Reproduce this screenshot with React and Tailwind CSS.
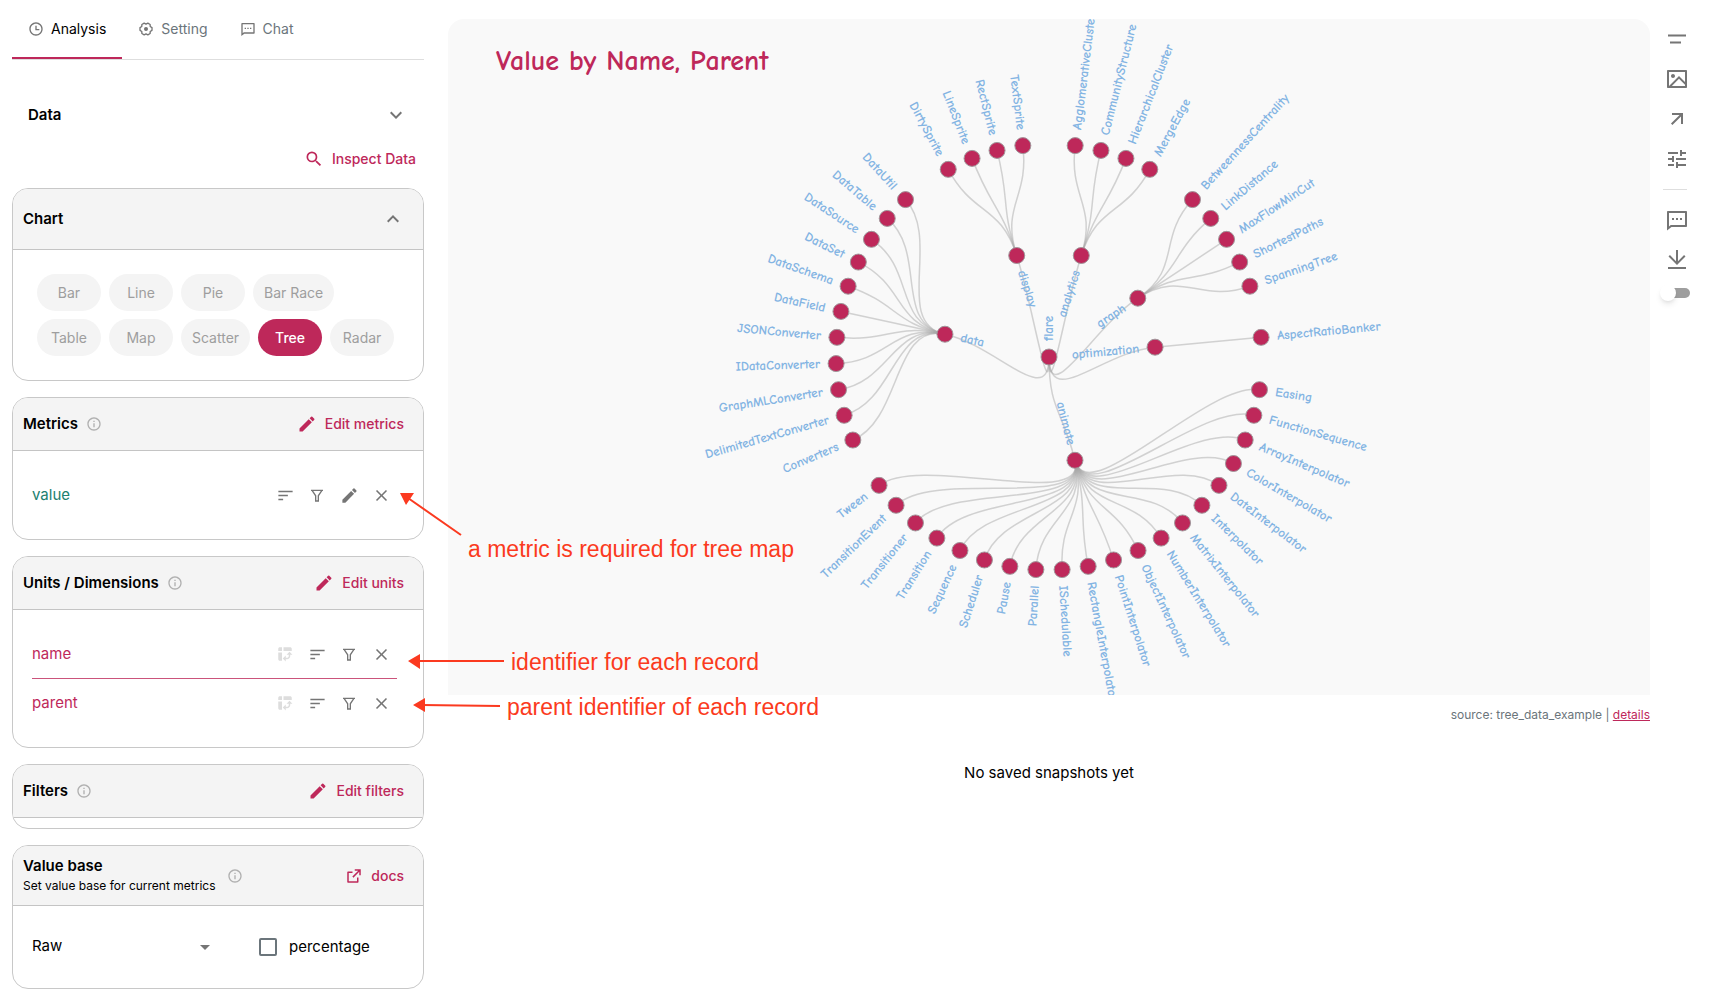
import { useState } from "react";
import { MdClose, MdEdit, MdInfoOutline, MdKeyboardArrowDown, MdKeyboardArrowUp, MdPivotTableChart, MdSearch, MdSort, MdTune } from "react-icons/md";
import {
  RiArrowRightUpLine,
  RiDownloadLine,
  RiExternalLinkLine,
  RiFilterLine,
  RiImageLine,
  RiMessage2Line,
  RiTimeLine,
} from "react-icons/ri";

const chartTypes = ["Bar", "Line", "Pie", "Bar Race", "Table", "Map", "Scatter", "Tree", "Radar"];

// clockwise from the top
const tree = [
  { name: "analytics", children: ["AgglomerativeCluster", "CommunityStructure", "HierarchicalCluster", "MergeEdge"] },
  { name: "graph", children: ["BetweennessCentrality", "LinkDistance", "MaxFlowMinCut", "ShortestPaths", "SpanningTree"] },
  { name: "optimization", children: ["AspectRatioBanker"] },
  {
    name: "animate",
    children: [
      "Easing",
      "FunctionSequence",
      "ArrayInterpolator",
      "ColorInterpolator",
      "DateInterpolator",
      "Interpolator",
      "MatrixInterpolator",
      "NumberInterpolator",
      "ObjectInterpolator",
      "PointInterpolator",
      "RectangleInterpolator",
      "ISchedulable",
      "Parallel",
      "Pause",
      "Scheduler",
      "Sequence",
      "Transition",
      "Transitioner",
      "TransitionEvent",
      "Tween",
    ],
  },
  {
    name: "data",
    children: [
      "Converters",
      "DelimitedTextConverter",
      "GraphMLConverter",
      "IDataConverter",
      "JSONConverter",
      "DataField",
      "DataSchema",
      "DataSet",
      "DataSource",
      "DataTable",
      "DataUtil",
    ],
  },
  { name: "display", children: ["DirtySprite", "LineSprite", "RectSprite", "TextSprite"] },
];

const RING = 106.5;

function polar(angle, r) {
  return [r * Math.sin(angle), -r * Math.cos(angle)];
}

function layoutTree() {
  // one slot per leaf plus one empty slot between groups
  const slots = tree.reduce((sum, g) => sum + g.children.length + 1, 0);
  const step = (2 * Math.PI) / slots;
  const root = { name: "flare", angle: Math.PI, r: 0, root: true };
  const nodes = [];
  const links = [];
  let slot = 1;
  tree.forEach((group) => {
    const first = slot;
    const leaves = group.children.map((name) => ({ name, angle: step * slot++, r: RING * 2, leaf: true }));
    const parent = { name: group.name, angle: (step * (first + slot - 1)) / 2, r: RING };
    slot++;
    nodes.push(parent, ...leaves);
    links.push([root, parent]);
    leaves.forEach((leaf) => links.push([parent, leaf]));
  });
  nodes.push(root);
  return { nodes, links };
}

function linkPath([a, b]) {
  const mid = (a.r + b.r) / 2;
  const pts = [polar(a.angle, a.r), polar(a.angle, mid), polar(b.angle, mid), polar(b.angle, b.r)];
  return `M${pts[0]} C${pts[1]} ${pts[2]} ${pts[3]}`;
}

function labelProps(node) {
  const [x, y] = polar(node.angle, node.r);
  if (node.root) return { transform: "rotate(-90)", x: 16, textAnchor: "start" };
  const left = x < 0;
  const deg = (node.angle * 180) / Math.PI - 90 - (left ? 180 : 0);
  const after = left !== Boolean(node.leaf);
  return {
    transform: `translate(${x} ${y}) rotate(${deg})`,
    x: after ? 16 : -16,
    textAnchor: after ? "start" : "end",
  };
}

function TreeChart() {
  const { nodes, links } = layoutTree();
  return (
    <svg viewBox="-601 -338 1202 676" className="block w-full h-auto" role="img" aria-label="Tree chart">
      <g fill="none" stroke="#aaaaaa" strokeOpacity="0.5" strokeWidth="1.5">
        {links.map((l, i) => (
          <path key={i} d={linkPath(l)} />
        ))}
      </g>
      <g fill="#be285a" stroke="#a0969a" strokeWidth="1">
        {nodes.map((n) => {
          const [cx, cy] = polar(n.angle, n.r);
          return <circle key={n.name} cx={cx} cy={cy} r="8" />;
        })}
      </g>
      <g fill="#83b4e3" className="font-['Comic_Sans_MS','Comic_Neue','Noto_Sans',sans-serif] text-[13px] font-bold">
        {nodes.map((n) => (
          <text key={n.name} dy="4" {...labelProps(n)}>
            {n.name}
          </text>
        ))}
      </g>
    </svg>
  );
}

function GearIcon() {
  return (
    <svg width="16" height="16" viewBox="0 0 24 24" fill="none" stroke="currentColor" strokeWidth="2" strokeLinejoin="round">
      <path d="M21 10v4l-2.7 1.7-.1 3.1-3.4 2L12 19.3l-2.8 1.5-3.4-2-.1-3.1L3 14v-4l2.7-1.7.1-3.1 3.4-2L12 4.7l2.8-1.5 3.4 2 .1 3.1z" />
      <circle cx="12" cy="12" r="2" fill="currentColor" />
    </svg>
  );
}

function Card({ header, children }) {
  return (
    <section className="border border-[#c8c8c8] rounded-2xl overflow-hidden">
      {header}
      {children}
    </section>
  );
}

function CardHeader({ title, action, onAction }) {
  return (
    <div className="h-[53px] flex items-center bg-[#f4f4f4] border-b border-[#c4c4c4] pl-2.5 pr-[19px]">
      <h2 className="text-[15px] font-semibold">{title}</h2>
      <MdInfoOutline size={16} className="ml-2 text-[#b0b0b0]" />
      <button onClick={onAction} className="ml-auto flex items-center gap-2 text-sm font-medium text-[#be285a]">
        <MdEdit size={20} />
        {action}
      </button>
    </div>
  );
}

function IconButton({ label, children, disabled }) {
  return (
    <button aria-label={label} disabled={disabled} className="w-4 h-4 flex items-center justify-center disabled:text-[#dddddd]">
      {children}
    </button>
  );
}

function FieldRow({ name, color, pivot, edit }) {
  return (
    <div className="h-12 flex items-center">
      <span className={`text-[15px] ${color}`}>{name}</span>
      <div className="ml-auto mr-2 flex gap-4 text-[#757575]">
        {pivot && (
          <IconButton label="Pivot" disabled>
            <MdPivotTableChart size={18} className="shrink-0" />
          </IconButton>
        )}
        <IconButton label="Sort">
          <MdSort size={19} className="shrink-0" />
        </IconButton>
        <IconButton label="Filter">
          <RiFilterLine size={16} />
        </IconButton>
        {edit && (
          <IconButton label="Edit">
            <MdEdit size={19} className="shrink-0" />
          </IconButton>
        )}
        <IconButton label="Remove">
          <MdClose size={19} className="shrink-0" />
        </IconButton>
      </div>
    </div>
  );
}

function Tab({ icon, label, active, onClick }) {
  return (
    <button
      role="tab"
      aria-selected={active}
      onClick={onClick}
      className={`h-[59px] px-4 flex items-center gap-[7px] text-sm border-b-2 ${
        active ? "border-[#be285a] text-black" : "border-transparent text-[#6b757b]"
      }`}
    >
      <span className="text-[#757575]">{icon}</span>
      {label}
    </button>
  );
}

function Sidebar() {
  const [tab, setTab] = useState("Analysis");
  const [type, setType] = useState("Tree");
  return (
    <aside className="w-[412px] shrink-0">
      <div role="tablist" className="flex border-b border-[#dedede]">
        <Tab icon={<RiTimeLine size={16} />} label="Analysis" active={tab === "Analysis"} onClick={() => setTab("Analysis")} />
        <Tab icon={<GearIcon />} label="Setting" active={tab === "Setting"} onClick={() => setTab("Setting")} />
        <Tab icon={<RiMessage2Line size={16} />} label="Chat" active={tab === "Chat"} onClick={() => setTab("Chat")} />
      </div>

      <div className="pt-[41px] px-4 flex items-center justify-between">
        <h2 className="text-[15px] font-semibold h-7 flex items-center">Data</h2>
        <button aria-label="Expand data" className="text-[#757575]">
          <MdKeyboardArrowDown size={24} />
        </button>
      </div>
      <div className="pt-5 pb-[19px] pr-2 flex justify-end">
        <button className="flex items-center gap-2 text-sm font-medium text-[#be285a]">
          <MdSearch size={20} />
          Inspect Data
        </button>
      </div>

      <div className="flex flex-col gap-4 pb-4">
        <Card
          header={
            <div className="h-[61px] flex items-center justify-between bg-[#f4f4f4] border-b border-[#c4c4c4] pl-2.5 pr-[18px]">
              <h2 className="text-[15px] font-semibold">Chart</h2>
              <button aria-label="Collapse chart" className="text-[#757575]">
                <MdKeyboardArrowUp size={24} />
              </button>
            </div>
          }
        >
          <div className="p-6 flex flex-wrap gap-2">
            {chartTypes.map((t) => (
              <button
                key={t}
                onClick={() => setType(t)}
                className={`h-[37px] min-w-16 px-[11px] rounded-full text-sm ${
                  t === type ? "bg-[#be285a] text-white font-medium" : "bg-[#f4f4f4] text-[#9e9e9e]"
                }`}
              >
                {t}
              </button>
            ))}
          </div>
        </Card>

        <Card header={<CardHeader title="Metrics" action="Edit metrics" />}>
          <div className="py-5 pl-[19px] pr-[26px]">
            <FieldRow name="value" color="text-[#208070]" edit />
          </div>
        </Card>

        <Card header={<CardHeader title="Units / Dimensions" action="Edit units" />}>
          <div className="py-5 pl-[19px] pr-[26px]">
            <div className="border-b border-[#be285a]/80">
              <FieldRow name="name" color="text-[#be285a]" pivot />
            </div>
            <FieldRow name="parent" color="text-[#be285a]" pivot />
          </div>
        </Card>

        <Card header={<CardHeader title="Filters" action="Edit filters" />}>
          <div className="h-2.5" />
        </Card>

        <Card
          header={
            <div className="h-[60px] flex items-center bg-[#f4f4f4] border-b border-[#c4c4c4] pl-2.5 pr-[19px]">
              <div>
                <h2 className="text-[15px] leading-5 font-semibold">Value base</h2>
                <p className="text-xs leading-5">Set value base for current metrics</p>
              </div>
              <MdInfoOutline size={16} className="ml-3 text-[#b0b0b0]" />
              <a href="#docs" className="ml-auto flex items-center gap-2 text-sm font-medium text-[#be285a]">
                <RiExternalLinkLine size={18} />
                docs
              </a>
            </div>
          }
        >
          <div className="h-[82px] pl-[19px] pr-5 flex items-center">
            <div className="relative w-[184px] mr-[43px] pb-1">
              <select aria-label="Value base" defaultValue="raw" className="w-full appearance-none bg-transparent text-[15px]">
                <option value="raw">Raw</option>
                <option value="growth">Growth</option>
              </select>
              <svg viewBox="0 0 10 5" className="absolute right-1.5 top-3 w-2.5 h-[5px] pointer-events-none" fill="#757575">
                <path d="M0 0h10L5 5z" />
              </svg>
            </div>
            <label className="flex items-center gap-3 text-[15px]">
              <input type="checkbox" className="appearance-none w-[18px] h-[18px] border-2 border-[#6b757b] rounded-xs checked:bg-[#be285a]" />
              percentage
            </label>
          </div>
        </Card>
      </div>
    </aside>
  );
}

function Toolbar() {
  return (
    <nav aria-label="Chart tools" className="w-[62px] shrink-0 pt-[27px] pr-2 flex flex-col items-center gap-4 text-[#757575]">
      <button aria-label="Text">
        <svg width="24" height="24" viewBox="0 0 24 24" stroke="currentColor" strokeWidth="2">
          <path d="M3 8.5h18M5 15.5h11" />
        </svg>
      </button>
      <button aria-label="Image">
        <RiImageLine size={24} />
      </button>
      <button aria-label="Arrow">
        <RiArrowRightUpLine size={24} />
      </button>
      <button aria-label="Adjust">
        <MdTune size={24} />
      </button>
      <hr className="w-6 my-0.5 mr-1 border-[#dedede]" />
      <button aria-label="Comment">
        <RiMessage2Line size={24} />
      </button>
      <button aria-label="Download">
        <RiDownloadLine size={24} />
      </button>
      <input
        type="checkbox"
        role="switch"
        aria-label="Auto refresh"
        className="relative appearance-none w-[26px] h-2.5 rounded-full bg-[#9e9e9e] before:absolute before:-left-1 before:-top-[3px] before:w-4 before:h-4 before:rounded-full before:bg-white before:shadow-md checked:before:left-3.5"
      />
    </nav>
  );
}

// hand-placed notes over the page
function Annotations() {
  return (
    <div className="absolute left-0 top-0 pointer-events-none text-[23px] leading-7 text-[#fb3a20] font-['Liberation_Sans',Arial,sans-serif] whitespace-nowrap">
      <svg width="110" height="240" viewBox="400 480 110 240" className="absolute left-[400px] top-[480px]" fill="currentColor" stroke="currentColor">
        <path d="M408 498 461 535M418 661H504M422 705 500 706" strokeWidth="2" />
        <path d="M400 493h14l-8 12zM408 661l12-7v15zM413 705l12-7v14z" stroke="none" />
      </svg>
      <p className="absolute left-[468px] top-[535px]">a metric is required for tree map</p>
      <p className="absolute left-[511px] top-[648px]">identifier for each record</p>
      <p className="absolute left-[507px] top-[693px]">parent identifier of each record</p>
    </div>
  );
}

export default function App() {
  return (
    <div className="relative min-h-screen flex bg-white pl-3 text-black font-['Inter',sans-serif]">
      <Sidebar />
      <main className="flex-1 min-w-0 pl-6 pt-[19px]">
        <div className="relative bg-[#f9f9f9] rounded-t-2xl overflow-hidden">
          <h1 className="absolute left-12 top-6 text-[28px] leading-9 font-bold text-[#be285a] font-['Comic_Sans_MS','Comic_Neue','Noto_Sans',sans-serif]">
            Value by Name, Parent
          </h1>
          <TreeChart />
        </div>
        <p className="mt-2.5 text-right text-xs leading-5 text-[#6b757b]">
          source: tree_data_example |{" "}
          <a href="#details" className="text-[#be285a] underline">
            details
          </a>
        </p>
        <p className="mt-9 text-center text-[15px] leading-6">No saved snapshots yet</p>
      </main>
      <Toolbar />
      <Annotations />
    </div>
  );
}
